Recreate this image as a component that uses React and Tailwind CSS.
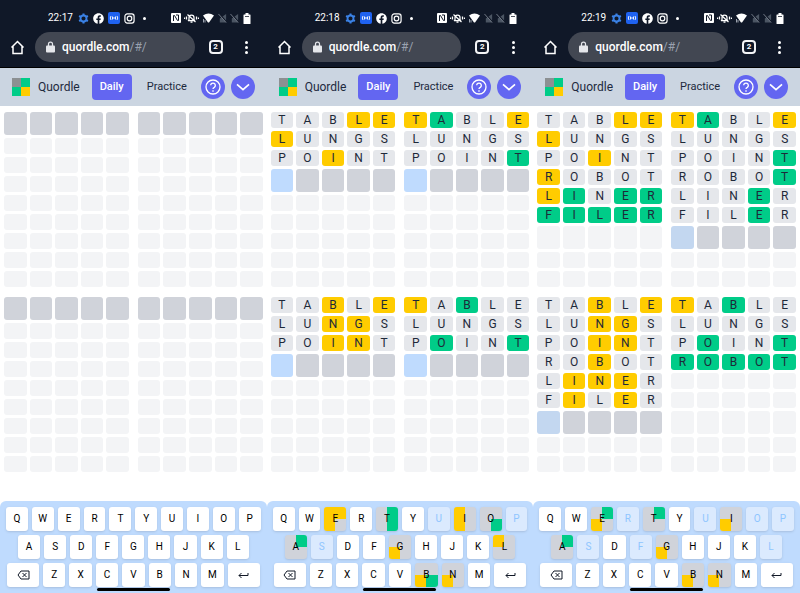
import clsx from 'clsx'
import { FaFacebook } from 'react-icons/fa'

const ROWS = 9

// y = right letter, wrong spot / g = right spot / . = not in the word
const PHONES = [
  {
    time: '22:17',
    apps: ['settings', 'facebook', 'cast', 'instagram'],
    guesses: [],
    marks: [[], [], [], []],
    keys: {},
  },
  {
    time: '22:18',
    apps: ['settings', 'cast', 'facebook', 'instagram'],
    guesses: ['TABLE', 'LUNGS', 'POINT'],
    marks: [
      ['...yy', 'y....', '..y..'],
      ['yg..y', '.....', '....g'],
      ['..y.y', '..yy.', '..yy.'],
      ['y.g..', '.....', '.g..g'],
    ],
    keys: {
      E: 'yyy.', T: '.g.g', U: 'x', I: 'y.y.', O: '...g', P: 'x',
      A: '.g..', S: 'x', G: '..y.', L: 'y...',
      B: '..yg', N: '..y.',
    },
  },
  {
    time: '22:19',
    apps: ['settings', 'cast', 'facebook', 'instagram'],
    guesses: ['TABLE', 'LUNGS', 'POINT', 'ROBOT', 'LINER', 'FILER'],
    marks: [
      ['...yy', 'y....', '..y..', 'y....', 'yg.gg', 'ggggg'],
      ['yg..y', '.....', '....g', '....g', '...g.', '...g.'],
      ['..y.y', '..yy.', '..yy.', '..y..', '.yyy.', '.y.y.'],
      ['y.g..', '.....', '.g..g', 'ggggg'],
    ],
    keys: {
      E: '.gy.', R: 'x', T: '.g..', U: 'x', I: '..y.', O: 'x', P: 'x',
      A: '.g..', S: 'x', F: 'x', G: '..y.', L: 'x',
      B: '..y.', N: '..y.',
    },
    fading: true,
  },
]

const MARK_COLORS = {
  y: 'bg-[#ffcc00]',
  g: 'bg-[#00cc88]',
}

function AppIcon({ name }) {
  if (name === 'facebook') return <FaFacebook className="size-[11px] text-white" />
  if (name === 'settings') {
    return (
      <svg viewBox="0 0 24 24" className="size-[11px]" fill="none" stroke="#3b82e6">
        <circle cx="12" cy="12" r="6.5" strokeWidth="4" />
        <path strokeWidth="4.5" d="M12 1v4M12 19v4M2.5 6.5l3.4 2M18.1 15.5l3.4 2M21.5 6.5l-3.4 2M5.9 15.5l-3.4 2" />
      </svg>
    )
  }
  if (name === 'cast') {
    return (
      <svg viewBox="0 0 24 24" className="size-[12px]" fill="none" stroke="#fff" strokeWidth="1.8">
        <rect width="24" height="24" rx="4" fill="#1f62f0" stroke="none" />
        <path d="M6 8q-3 4 0 8M18 8q3 4 0 8M9 9v6M15 9v6M9 12h6" />
      </svg>
    )
  }
  return (
    <svg viewBox="0 0 24 24" className="size-[11px]" fill="none" stroke="#fff" strokeWidth="2.6">
      <rect x="2" y="2" width="20" height="20" rx="5" />
      <circle cx="12" cy="12" r="5" />
      <circle cx="17.5" cy="6.5" r="1" fill="#fff" stroke="none" />
    </svg>
  )
}

function NoSim() {
  return (
    <svg viewBox="0 0 20 22" className="h-[10px] w-[9px]">
      <path d="M4 21V12L18 2v19z" fill="#4b5563" />
      <path d="M4 3l15 17" stroke="#111827" strokeWidth="3" />
      <path d="M1 2l17 19" stroke="#7b8290" strokeWidth="2" />
    </svg>
  )
}

function StatusBar({ time, apps }) {
  return (
    <div className="flex h-8 items-center justify-between pt-1 pr-4 pl-12">
      <div className="flex items-center gap-1">
        <span className="w-[26px] text-[10px] leading-3 text-white">{time}</span>
        {apps.map(name => <AppIcon key={name} name={name} />)}
        <span className="ml-1 size-[3px] rounded-full bg-white" />
      </div>
      <div className="flex items-center gap-[3px]">
        <svg viewBox="0 0 20 20" className="size-[10px]">
          <rect width="20" height="20" rx="2" fill="#fff" />
          <path d="M5 16V5h2l6 10h2V4M10 4h5" fill="none" stroke="#111827" strokeWidth="2" />
        </svg>
        <svg viewBox="0 0 30 20" className="h-[10px] w-[15px]" fill="none" stroke="#fff" strokeWidth="2.5">
          <path d="M10 14V9a5 5 0 0 1 10 0v5l2 1H8zM13 18h4M7 3l16 15M5 7v6M1 9v3M25 7v6M29 9v3" />
        </svg>
        <svg viewBox="0 0 24 20" className="h-[10px] w-[13px]">
          <path d="M1 5Q12-3 23 5L13 19h-2z" fill="#fff" />
          <path d="M2 12v7M5 14v5" stroke="#9ca3af" strokeWidth="2" />
        </svg>
        <NoSim />
        <NoSim />
        <svg viewBox="0 0 16 22" className="ml-px h-[11px] w-[8px]">
          <path d="M5 0h6v3h3q1 0 1 1v17q0 1-1 1H2q-1 0-1-1V4q0-1 1-1h3z" fill="#fff" />
          <path d="M4 7h8" stroke="#111827" strokeWidth="1.5" />
        </svg>
      </div>
    </div>
  )
}

function BrowserBar() {
  return (
    <div className="flex items-center border-b border-black pr-[14px] pb-[5px] pl-[10px]">
      <button aria-label="Home">
        <svg viewBox="0 0 30 30" className="size-[15px]" fill="none" stroke="#fff" strokeWidth="3">
          <path d="M3 15L15 3l12 12M6 13v14h18V13" />
        </svg>
      </button>
      <div className="ml-[10px] flex h-[30px] grow items-center rounded-full bg-[#424752] pl-[11px] text-[12px] leading-4">
        <svg viewBox="0 0 18 24" className="mr-[7px] h-3 w-[9px]">
          <path d="M5 10V6a4 4 0 0 1 8 0v4" fill="none" stroke="#e5e7eb" strokeWidth="2.5" />
          <rect y="9" width="18" height="14" rx="2" fill="#e5e7eb" />
        </svg>
        <input
          aria-label="Address"
          defaultValue="quordle.com"
          className="field-sizing-content font-medium text-white outline-none"
        />
        <span className="text-gray-400">/#/</span>
      </div>
      <button
        aria-label="Open tabs"
        className="ml-[14px] flex size-[14px] items-center justify-center rounded-[4px] border-2 border-gray-100 text-[8px] leading-none font-bold text-white"
      >
        2
      </button>
      <button aria-label="Menu" className="ml-[18px] flex w-3 flex-col items-center gap-[2px]">
        <span className="size-[3px] rounded-full bg-white" />
        <span className="size-[3px] rounded-full bg-white" />
        <span className="size-[3px] rounded-full bg-white" />
      </button>
    </div>
  )
}

function Header() {
  return (
    <header className="flex h-[38px] items-center bg-[#cbd5e1] px-3 text-slate-800">
      <div className="grid size-[18px] shrink-0 grid-cols-2">
        <span className="bg-[#8c9092]" />
        <span className="bg-[#00cc88]" />
        <span className="bg-[#00cc88]" />
        <span className="bg-[#ffcc00]" />
      </div>
      <h1 className="ml-2 text-[12px] leading-4">Quordle</h1>
      <button className="ml-3 h-[26px] w-10 rounded-[4px] bg-[#6366f1] text-[11px] font-medium text-white">
        Daily
      </button>
      <button className="ml-[15px] text-[11px]">Practice</button>
      <button aria-label="Help" className="ml-auto flex size-6 items-center justify-center rounded-full bg-[#6366f1]">
        <svg viewBox="0 0 24 24" className="size-4" fill="none" stroke="#fff" strokeWidth="2">
          <circle cx="12" cy="12" r="10.5" />
          <path d="M8.5 9.5a3.5 3.5 0 1 1 5.5 3q-2 1.200-2 2.500M12 17v2" />
        </svg>
      </button>
      <button aria-label="More" className="ml-[6px] flex size-6 items-center justify-center rounded-full bg-[#6366f1]">
        <svg viewBox="0 0 24 24" className="size-4" fill="none" stroke="#fff" strokeWidth="2.5">
          <path d="M3 8l9 8 9-8" />
        </svg>
      </button>
    </header>
  )
}

function Board({ guesses, marks, fading }) {
  const current = guesses.length
  const solved = marks.includes('ggggg')

  return (
    <div className="flex flex-col gap-[3px]">
      {Array.from({ length: ROWS }, (_, row) => (
        <div key={row} className={clsx('grid grid-cols-5 gap-[3px]', row === current ? 'h-[23px]' : 'h-4')}>
          {Array.from({ length: 5 }, (_, col) => {
            const filled = row < marks.length
            const active = row === current && !solved
            const cursor = active && current > 0 && col === 0
            return (
              <div
                key={col}
                className={clsx(
                  'flex items-center justify-center rounded-[3px] text-[12px] leading-4 text-gray-800',
                  filled && (MARK_COLORS[marks[row][col]] || 'bg-gray-200'),
                  cursor && (fading ? 'bg-[#c3d7f0]' : 'bg-[#bfdbfe]'),
                  active && !cursor && 'bg-[#d0d3da]',
                  !filled && !active && 'bg-gray-100',
                )}
              >
                {filled && guesses[row][col]}
              </div>
            )
          })}
        </div>
      ))}
    </div>
  )
}

function Key({ label, state, wide, children }) {
  const absent = state === 'x'
  return (
    <button
      aria-label={label}
      className={clsx(
        'relative flex h-6 items-center justify-center overflow-hidden rounded-[3px] text-[10px] leading-3 shadow',
        wide ? 'w-8' : 'flex-1',
        !state && 'bg-white text-black',
        absent && 'bg-blue-100 text-blue-300',
        state && !absent && 'bg-[#d0d3da] text-black',
      )}
    >
      {state && !absent && (
        <span className="absolute inset-0 grid grid-cols-2 grid-rows-2">
          {[...state].map((mark, i) => <span key={i} className={MARK_COLORS[mark]} />)}
        </span>
      )}
      <span className="relative">{children || label}</span>
    </button>
  )
}

function Keyboard({ keys }) {
  const letters = row => [...row].map(k => <Key key={k} label={k} state={keys[k]} />)
  return (
    <div className="mt-auto rounded-t-md bg-[#bfdbfe] pt-[6px] pb-[2px]">
      <div className="flex flex-col gap-1">
        <div className="flex gap-1 px-[6px]">{letters('QWERTYUIOP')}</div>
        <div className="flex gap-1 px-[18px]">{letters('ASDFGHJKL')}</div>
        <div className="flex gap-1 px-[7px]">
          <Key label="Backspace" wide>
            <svg viewBox="0 0 26 20" className="h-[10px] w-[13px]" fill="none" stroke="#111827" strokeWidth="2">
              <path d="M8 2h16v16H8L2 10zM11 6l8 8M19 6l-8 8" />
            </svg>
          </Key>
          {letters('ZXCVBNM')}
          <Key label="Enter" wide>
            <svg viewBox="0 0 22 16" className="h-2 w-[11px]" fill="none" stroke="#111827" strokeWidth="2">
              <path d="M7 4L2 9l5 5M2 9h18V4" />
            </svg>
          </Key>
        </div>
      </div>
      <div className="mx-auto mt-px h-[3px] w-[73px] rounded-full bg-black" />
    </div>
  )
}

function Phone({ time, apps, guesses, marks, keys, fading }) {
  return (
    <section className="flex min-w-0 flex-col bg-white">
      <div className="bg-gray-900">
        <StatusBar time={time} apps={apps} />
        <BrowserBar />
      </div>
      <Header />
      <div className="grid grid-cols-2 gap-x-[9px] gap-y-[10px] px-1 py-[6px]">
        {marks.map((m, i) => <Board key={i} guesses={guesses} marks={m} fading={fading} />)}
      </div>
      <Keyboard keys={keys} />
    </section>
  )
}

export default function App() {
  return (
    <main className="grid min-h-screen grid-cols-3 font-[Roboto,sans-serif]">
      {PHONES.map(phone => <Phone key={phone.time} {...phone} />)}
    </main>
  )
}
